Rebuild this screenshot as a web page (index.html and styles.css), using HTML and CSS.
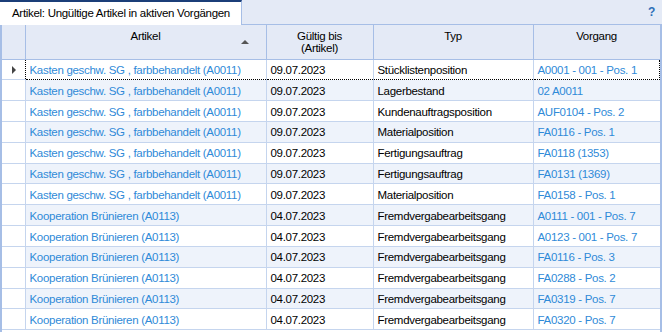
FILE: index.html
```html
<!DOCTYPE html>
<html lang="de">

<head>
    <meta charset="UTF-8">
    <title>Artikel: Ungültige Artikel in aktiven Vorgängen</title>
    <link rel="stylesheet" href="styles.css">
</head>

<body>
    <div class="tabstrip">
        <div class="tab">Artikel: Ungültige Artikel in aktiven Vorgängen</div>
        <div class="help">?</div>
    </div>

    <div class="grid">
        <table>
            <colgroup>
                <col class="c-ind">
                <col class="c-art">
                <col class="c-date">
                <col class="c-typ">
                <col class="c-vg">
            </colgroup>
            <thead>
                <tr>
                    <th></th>
                    <th class="sorted">Artikel<span class="sort-arrow"></span></th>
                    <th>Gültig bis<br>(Artikel)</th>
                    <th>Typ</th>
                    <th>Vorgang</th>
                </tr>
            </thead>
            <tbody>
                <tr class="focused">
                    <td class="ind"><span class="row-arrow"></span></td>
                    <td class="link">Kasten geschw. SG , farbbehandelt (A0011)</td>
                    <td>09.07.2023</td>
                    <td>Stücklistenposition</td>
                    <td class="link">A0001 - 001 - Pos. 1</td>
                </tr>
                <tr>
                    <td class="ind"></td>
                    <td class="link">Kasten geschw. SG , farbbehandelt (A0011)</td>
                    <td>09.07.2023</td>
                    <td>Lagerbestand</td>
                    <td class="link">02 A0011</td>
                </tr>
                <tr>
                    <td class="ind"></td>
                    <td class="link">Kasten geschw. SG , farbbehandelt (A0011)</td>
                    <td>09.07.2023</td>
                    <td>Kundenauftragsposition</td>
                    <td class="link">AUF0104 - Pos. 2</td>
                </tr>
                <tr>
                    <td class="ind"></td>
                    <td class="link">Kasten geschw. SG , farbbehandelt (A0011)</td>
                    <td>09.07.2023</td>
                    <td>Materialposition</td>
                    <td class="link">FA0116 - Pos. 1</td>
                </tr>
                <tr>
                    <td class="ind"></td>
                    <td class="link">Kasten geschw. SG , farbbehandelt (A0011)</td>
                    <td>09.07.2023</td>
                    <td>Fertigungsauftrag</td>
                    <td class="link">FA0118 (1353)</td>
                </tr>
                <tr>
                    <td class="ind"></td>
                    <td class="link">Kasten geschw. SG , farbbehandelt (A0011)</td>
                    <td>09.07.2023</td>
                    <td>Fertigungsauftrag</td>
                    <td class="link">FA0131 (1369)</td>
                </tr>
                <tr>
                    <td class="ind"></td>
                    <td class="link">Kasten geschw. SG , farbbehandelt (A0011)</td>
                    <td>09.07.2023</td>
                    <td>Materialposition</td>
                    <td class="link">FA0158 - Pos. 1</td>
                </tr>
                <tr>
                    <td class="ind"></td>
                    <td class="link">Kooperation Brünieren (A0113)</td>
                    <td>04.07.2023</td>
                    <td>Fremdvergabearbeitsgang</td>
                    <td class="link">A0111 - 001 - Pos. 7</td>
                </tr>
                <tr>
                    <td class="ind"></td>
                    <td class="link">Kooperation Brünieren (A0113)</td>
                    <td>04.07.2023</td>
                    <td>Fremdvergabearbeitsgang</td>
                    <td class="link">A0123 - 001 - Pos. 7</td>
                </tr>
                <tr>
                    <td class="ind"></td>
                    <td class="link">Kooperation Brünieren (A0113)</td>
                    <td>04.07.2023</td>
                    <td>Fremdvergabearbeitsgang</td>
                    <td class="link">FA0116 - Pos. 3</td>
                </tr>
                <tr>
                    <td class="ind"></td>
                    <td class="link">Kooperation Brünieren (A0113)</td>
                    <td>04.07.2023</td>
                    <td>Fremdvergabearbeitsgang</td>
                    <td class="link">FA0288 - Pos. 2</td>
                </tr>
                <tr>
                    <td class="ind"></td>
                    <td class="link">Kooperation Brünieren (A0113)</td>
                    <td>04.07.2023</td>
                    <td>Fremdvergabearbeitsgang</td>
                    <td class="link">FA0319 - Pos. 7</td>
                </tr>
                <tr>
                    <td class="ind"></td>
                    <td class="link">Kooperation Brünieren (A0113)</td>
                    <td>04.07.2023</td>
                    <td>Fremdvergabearbeitsgang</td>
                    <td class="link">FA0320 - Pos. 7</td>
                </tr>
            </tbody>
        </table>
    </div>
</body>

</html>
```

FILE: styles.css
```css
body {
    margin: 0;
    padding: 0;
    width: 662px;
    height: 332px;
    overflow: hidden;
    background-color: #e4eaf6;
    font-family: 'Liberation Sans', Arial, sans-serif;
    font-size: 11.5px;
    letter-spacing: -0.3px;
    color: black;
}

.tabstrip {
    display: flex;
    justify-content: space-between;
    align-items: flex-start;
    height: 25px;
    border-bottom: 1px solid #a6bee6;
    box-sizing: border-box;
}

.tab {
    width: 242px;
    height: 25px;
    box-sizing: border-box;
    border-top: 2px solid #1b3e78;
    border-right: 1px solid #a6bee6;
    background-color: white;
    padding: 5px 0 0 12px;
    white-space: nowrap;
}

.help {
    color: #2e6fb8;
    font-weight: bold;
    font-size: 12px;
    padding: 5px 7px 0 0;
}

.grid {
    border-left: 2px solid #a6bee6;
    border-right: 2px solid #a6bee6;
    height: 307px;
    overflow: hidden;
    background-color: white;
}

table {
    width: 100%;
    table-layout: fixed;
    border-collapse: collapse;
}

.c-ind {
    width: 23px;
}

.c-art {
    width: 241px;
}

.c-date {
    width: 107px;
}

.c-typ {
    width: 160px;
}

th {
    height: 34px;
    box-sizing: border-box;
    background-color: #e4eaf6;
    font-weight: normal;
    text-align: center;
    vertical-align: top;
    padding: 5px 2px 0 2px;
    line-height: 12px;
    border-left: 1px solid #a6bee6;
    border-bottom: 1px solid #a6bee6;
    position: relative;
}

th:first-child {
    border-left: none;
}

.sort-arrow {
    position: absolute;
    right: 17px;
    top: 15px;
    width: 0;
    height: 0;
    border-left: 4px solid transparent;
    border-right: 4px solid transparent;
    border-bottom: 4px solid #555;
}

td {
    height: 20.83px;
    box-sizing: border-box;
    padding: 1px 4px 0 4px;
    white-space: nowrap;
    overflow: hidden;
    border-left: 1px solid #c5d5ee;
    border-bottom: 1px solid #c5d5ee;
}

td.ind {
    border-left: none;
    padding: 0;
    position: relative;
    background-color: white;
}

tbody tr:nth-child(even) td {
    background-color: #eef3fb;
}

tbody tr:nth-child(even) td.ind {
    background-color: white;
}

td.link {
    color: #2f8ad8;
}

.row-arrow {
    position: absolute;
    left: 10px;
    top: 6px;
    width: 0;
    height: 0;
    border-top: 4px solid transparent;
    border-bottom: 4px solid transparent;
    border-left: 4px solid #444;
}

tr.focused td:not(.ind) {
    border-top: 1px dotted black;
    border-bottom: 1px dotted black;
}

tr.focused td:nth-child(2) {
    border-left: 1px dotted black;
}

tr.focused td:last-child {
    border-right: 1px dotted black;
}
```
